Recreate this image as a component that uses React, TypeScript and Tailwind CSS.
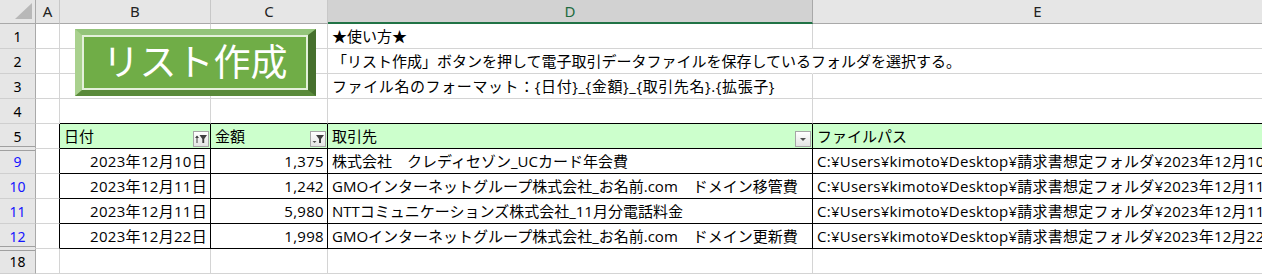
import React from "react";

const JP = "font-['Open_Sans','Noto_Sans_CJK_JP',sans-serif]";
const JPB = "font-['Noto_Sans_CJK_JP','Noto_Sans_CJK_SC',sans-serif]";
const HDR = "font-['Noto_Sans','Noto_Sans_CJK_JP',sans-serif]";

type Kind = "plain" | "filter" | "sortfilter";

function FilterBtn({ kind }: { kind: Kind }) {
  return (
    <div className="ml-auto mr-[1px] mb-[1px] self-end w-[16px] h-[16px] shrink-0 border border-[#a6a6a6] bg-gradient-to-b from-white to-[#e4e4e4]">
      <svg width="14" height="14" viewBox="0 0 14 14">
        {kind === "plain" && <polygon points="4,6 10,6 7,9" fill="#505050" />}
        {kind === "filter" && (
          <>
            <polygon points="1.5,9 5.5,9 3.5,11" fill="#505050" />
            <polygon points="5,3 13,3 10,7 10,11 8,11 8,7" fill="#404040" />
          </>
        )}
        {kind === "sortfilter" && (
          <>
            <line x1="3" y1="4" x2="3" y2="11" stroke="#404040" strokeWidth="1" />
            <polygon points="1,6 3,3.5 5,6" fill="#404040" />
            <polygon points="5.5,3 13,3 10.2,7 10.2,11 8.3,11 8.3,7" fill="#404040" />
          </>
        )}
      </svg>
    </div>
  );
}

type CellSpec = {
  content?: React.ReactNode;
  cls?: string;
};

const W = ["w-[24px]", "w-[151px]", "w-[117px]", "w-[485px]", "flex-1 min-w-0"];

function RowHeader({ n, blue, extra }: { n: string; blue?: boolean; extra?: string }) {
  return (
    <div
      className={`w-[36px] shrink-0 h-full flex items-center justify-center bg-[#e6e6e6] border-r border-r-[#a9a9a9] border-b border-b-[#cfcfcf] text-[14px] ${HDR} ${
        blue ? "text-[#1515ff]" : "text-black"
      } ${extra ?? ""}`}
    >
      {n}
    </div>
  );
}

function Row({
  n,
  blue,
  hdrExtra,
  cells,
}: {
  n: string;
  blue?: boolean;
  hdrExtra?: string;
  cells: CellSpec[];
}) {
  return (
    <div className="flex h-[25px]">
      <RowHeader n={n} blue={blue} extra={hdrExtra} />
      {cells.map((c, i) => (
        <div
          key={i}
          className={`${W[i]} shrink-0 h-full flex items-center whitespace-nowrap border-b border-b-[#d4d4d4] ${
            i === 4 ? "" : "border-r border-r-[#d4d4d4]"
          } ${JP} text-[15px] text-black ${c.cls ?? "overflow-hidden"}`}
        >
          {c.content}
        </div>
      ))}
    </div>
  );
}

const L = (t: string) => <span className="pl-[4px]">{t}</span>;
const P = (t: string) => <span className="pl-[4px] tracking-[0.25px]">{t}</span>;
const F = (t: string) => <span className="pl-[4px] tracking-[0.6px]">{t}</span>;
const R = (t: string) => <span className="ml-auto pr-[3px] tracking-[0.3px]">{t}</span>;

const T_IN = "overflow-hidden border-b-black";
const T_MID = "overflow-hidden border-b-black border-r-black";

const data = [
  {
    n: "9",
    d: "2023年12月10日",
    a: "1,375",
    p: "株式会社　クレディセゾン_UCカード年会費",
    f: "C:¥Users¥kimoto¥Desktop¥請求書想定フォルダ¥2023年12月10日_1375_株式会社　クレディセゾン_UCカード年会費.pdf",
  },
  {
    n: "10",
    d: "2023年12月11日",
    a: "1,242",
    p: "GMOインターネットグループ株式会社_お名前.com　ドメイン移管費",
    f: "C:¥Users¥kimoto¥Desktop¥請求書想定フォルダ¥2023年12月11日_1242_GMOインターネットグループ株式会社.pdf",
  },
  {
    n: "11",
    d: "2023年12月11日",
    a: "5,980",
    p: "NTTコミュニケーションズ株式会社_11月分電話料金",
    f: "C:¥Users¥kimoto¥Desktop¥請求書想定フォルダ¥2023年12月11日_5980_NTTコミュニケーションズ株式会社.pdf",
  },
  {
    n: "12",
    d: "2023年12月22日",
    a: "1,998",
    p: "GMOインターネットグループ株式会社_お名前.com　ドメイン更新費",
    f: "C:¥Users¥kimoto¥Desktop¥請求書想定フォルダ¥2023年12月22日_1998_GMOインターネットグループ株式会社.pdf",
  },
];

export default function App() {
  const colHdr = `h-full shrink-0 flex items-center justify-center bg-[#e6e6e6] border-b border-b-[#a9a9a9] border-r border-r-[#c8c8c8] text-[15px] text-[#222] ${HDR}`;
  return (
    <div className="relative w-[1262px] h-[274px] overflow-hidden bg-white select-none">
      {/* column headers */}
      <div className="flex h-[24px]">
        <div className="w-[36px] shrink-0 h-full bg-[#e6e6e6] border-r border-r-[#a9a9a9] border-b border-b-[#a9a9a9] relative">
          <svg width="35" height="23" className="absolute left-0 top-0">
            <polygon points="15,19 32,19 32,3" fill="#b8b8b8" />
          </svg>
        </div>
        <div className={`${colHdr} w-[24px]`}>A</div>
        <div className={`${colHdr} w-[151px]`}>B</div>
        <div className={`${colHdr} w-[117px]`}>C</div>
        <div
          className={`h-full shrink-0 w-[485px] flex items-center justify-center bg-[#d2d2d2] border-b-2 border-b-[#217346] border-r border-r-[#a9a9a9] text-[15px] text-[#1e6b40] ${HDR}`}
        >
          D
        </div>
        <div className={`${colHdr} flex-1 border-r-0`}>E</div>
      </div>

      <Row n="1" cells={[{}, {}, {}, { content: L("★使い方★") }, {}]} />
      <Row
        n="2"
        cells={[
          {},
          {},
          {},
          {
            content: L("「リスト作成」ボタンを押して電子取引データファイルを保存しているフォルダを選択する。"),
            cls: "overflow-visible border-r-transparent",
          },
          {},
        ]}
      />
      <Row
        n="3"
        cells={[
          {},
          {},
          {},
          { content: F("ファイル名のフォーマット：{日付}_{金額}_{取引先名}.{拡張子}"), cls: "overflow-visible" },
          {},
        ]}
      />
      <Row n="4" cells={[{}, { cls: T_IN }, { cls: T_IN }, { cls: T_IN }, { cls: T_IN }]} />
      <Row
        n="5"
        hdrExtra="border-b-[#e6e6e6] shadow-[inset_0_-1px_0_#e6e6e6,inset_0_-2px_0_#a0a0a0]"
        cells={[
          { cls: "border-r-black" },
          {
            content: (
              <>
                {L("日付")}
                <FilterBtn kind="sortfilter" />
              </>
            ),
            cls: `${T_MID} bg-[#ccffcc]`,
          },
          {
            content: (
              <>
                {L("金額")}
                <FilterBtn kind="filter" />
              </>
            ),
            cls: `${T_MID} bg-[#ccffcc]`,
          },
          {
            content: (
              <>
                {L("取引先")}
                <FilterBtn kind="plain" />
              </>
            ),
            cls: `${T_MID} bg-[#ccffcc]`,
          },
          { content: L("ファイルパス"), cls: `${T_IN} bg-[#ccffcc]` },
        ]}
      />
      {data.map((r, i) => (
        <Row
          key={r.n}
          n={r.n}
          blue
          hdrExtra={
            i === 0
              ? "shadow-[inset_0_1px_0_#e6e6e6,inset_0_2px_0_#a0a0a0]"
              : i === 3
              ? "border-b-[#e6e6e6] shadow-[inset_0_-1px_0_#e6e6e6,inset_0_-2px_0_#a0a0a0]"
              : ""
          }
          cells={[
            { cls: "border-r-black" },
            { content: R(r.d), cls: T_MID },
            { content: R(r.a), cls: T_MID },
            { content: L(r.p), cls: T_MID },
            { content: P(r.f), cls: T_IN },
          ]}
        />
      ))}
      <Row
        n="18"
        hdrExtra="shadow-[inset_0_1px_0_#e6e6e6,inset_0_2px_0_#a0a0a0]"
        cells={[{}, {}, {}, {}, {}]}
      />

      {/* リスト作成 button shape */}
      <div className="absolute left-[75px] top-[29px] w-[241px] h-[67px] border-l-[7px] border-t-[6px] border-r-[8px] border-b-[6px] border-l-[#a9d18e] border-t-[#93c47a] border-r-[#46702d] border-b-[#5a8a3b] cursor-pointer">
        <div
          className={`w-full h-full bg-[#70ad47] border-2 border-[#e3f0da] flex items-center justify-center text-white text-[37px] leading-none pb-[4px] ${JPB}`}
        >
          リスト作成
        </div>
      </div>
    </div>
  );
}
